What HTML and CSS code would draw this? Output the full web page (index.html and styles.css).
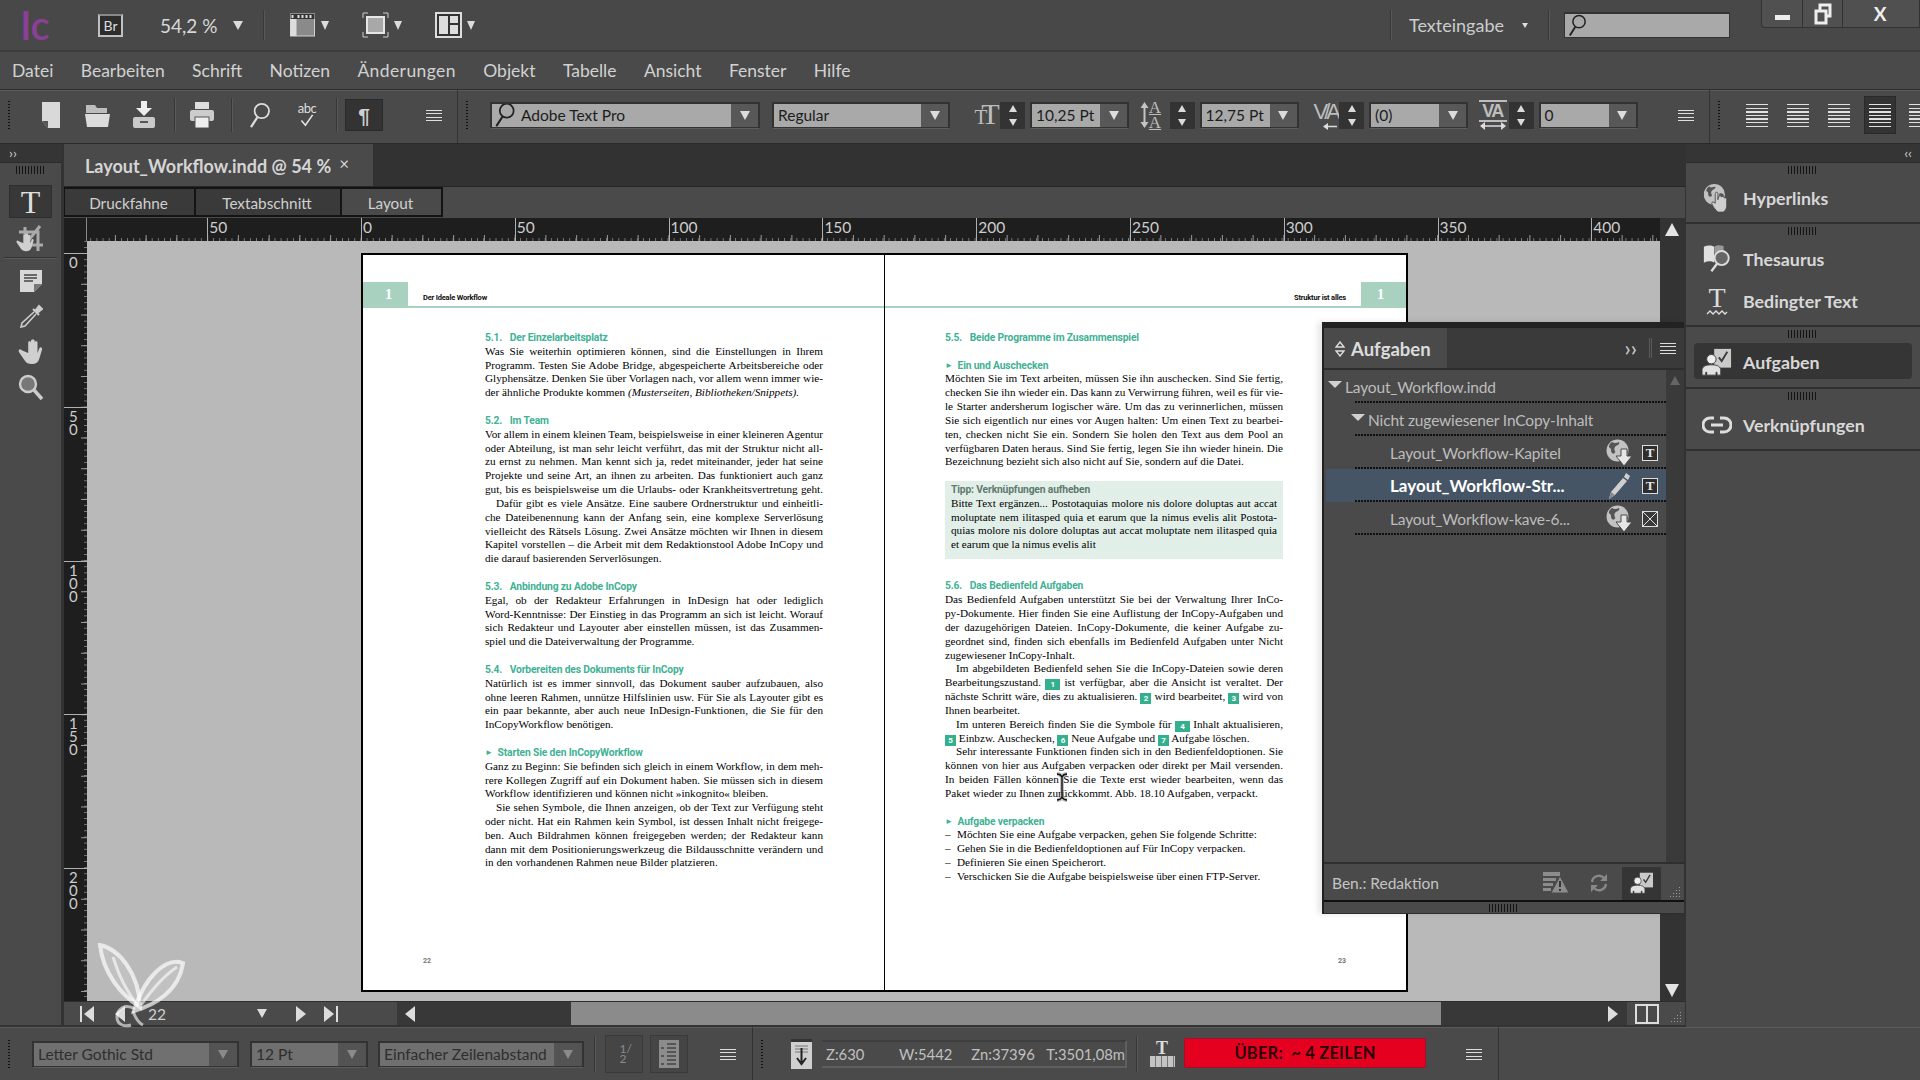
FILE: index.html
```html
<!DOCTYPE html>
<html lang="de">
<head>
<meta charset="utf-8">
<title>Adobe InCopy</title>
<link rel="stylesheet" href="styles.css">
</head>
<body>
<svg class="sprite" aria-hidden="true">
  <symbol id="globedown" viewBox="0 0 26 28"><circle cx="11.500" cy="11.500" r="11" fill="#c2c2c2"/><path d="M6 3c2 1.500 5 1 7 0 1 2-1 3-3 4s-2 4-1 5-1 4-3 2 0-4-2-5-1-4 2-6zm11 8c2-1 4 0 5 2-1 2-2 4-4 5-1-2 0-3 0-4s-2-2-1-3z" fill="#555"/><path d="M15 10h6v7h5l-8 10-8-10h5z" fill="#e6e6e6" stroke="#4a4a4a"/></symbol>
  <symbol id="globehand" viewBox="0 0 30 34"><circle cx="12" cy="13" r="12" fill="#c2c2c2"/><path d="M6 4c2 1.500 5 1 7 0 1 2-1 3-3 4s-2 4-1 5-1 4-3 2 0-4-2-5-1-4 2-6zm12 8c2-1 4 0 5 2-1 2-2 4-5 6-1-2 1-3 0-5s-1-2 0-3z" fill="#555"/><path d="M13 12c0-2 3-2 3 0v7l1-4c2-1 3 0 3 1l1-1c2 0 2 1 2 2 2-1 3 0 3 2v7c0 3-2 6-4 7h-6c-2-2-6-6-7-10 0-2 2-2 4 0z" fill="#cfcfcf" stroke="#4a4a4a"/></symbol>
  <symbol id="pencil" viewBox="0 0 24 28"><path d="M19 1l4 3-2 4-4-3zM16 6l4 3L8 23l-6 4 2-7z" fill="#cfcfcf"/><path d="M4 20l4 3-6 4z" fill="#8a8a8a"/></symbol>
  <symbol id="person" viewBox="0 0 32 30"><rect x="13" y="1" width="18" height="20" fill="#c9c9c9"/><path d="M18 10l3 4 6-10" fill="none" stroke="#3c3c3c" stroke-width="2"/><circle cx="10" cy="12" r="5" fill="#eee" stroke="#3c3c3c"/><path d="M0 29v-6c1-4 5-5 10-5s9 1 10 5v6h-4v-3h-1v3H5v-3H4v3z" fill="#e0e0e0" stroke="#3c3c3c"/></symbol>
  <symbol id="search" viewBox="0 0 24 30"><circle cx="14" cy="10" r="8" fill="none" stroke="currentColor" stroke-width="2"/><path d="M9 17L2 28" stroke="currentColor" stroke-width="2.500"/></symbol>
  <symbol id="hand" viewBox="0 0 28 28"><path d="M4 12c-2-2-4 0-3 2l6 9c2 3 4 4 8 4s7-2 8-6l3-10c0-2-2-3-3-1l-2 5V4c0-2-3-2-3 0v6V2c0-2-4-2-4 0v8V4c0-2-3-2-3 0v11z" fill="#cfcfcf"/></symbol>
</svg>

<div class="app">
  <header class="titlebar">
    <span class="logo">Ic</span>
    <span class="brbox">Br</span>
    <span class="zoomval">54,2 %</span>
    <span class="tri tri-zoom"></span>
    <span class="vsep vsep-title"></span>
    <svg class="ticon ticon-first" viewBox="0 0 26 26"><rect x="1" y="2" width="24" height="22" fill="#8a8a8a" stroke="#d0d0d0"/><rect x="1" y="2" width="6" height="22" fill="#ddd"/><rect x="1" y="2" width="24" height="5" fill="#333"/><path d="M3 3v3M9 3v3M13 3v3M17 3v3M21 3v3" stroke="#ddd" stroke-width="2"/></svg>
    <span class="tri tri-s"></span>
    <svg class="ticon ticon-next" viewBox="0 0 27 26"><path d="M1 6V1h5M21 1h5v5M26 20v5h-5M6 25H1v-5" fill="none" stroke="#ccc"/><rect x="5" y="5" width="17" height="16" fill="#a8a8a8" stroke="#e6e6e6" stroke-width="2"/></svg>
    <span class="tri tri-s"></span>
    <svg class="ticon ticon-next" viewBox="0 0 27 26"><rect x="1" y="1" width="25" height="24" fill="#333" stroke="#ddd" stroke-width="2"/><rect x="4" y="4" width="9" height="18" fill="#ddd"/><rect x="15" y="4" width="8" height="7" fill="#ddd"/><rect x="15" y="13" width="8" height="9" fill="#ddd"/></svg>
    <span class="tri tri-s"></span>
    <div class="titleright">
      <span class="vsep"></span>
      <span class="workspace">Texteingabe</span>
      <span class="tri tri-xs"></span>
      <span class="vsep"></span>
      <span class="searchbox"><svg class="searchicon" viewBox="0 0 24 30"><use href="#search"/></svg></span>
      <div class="winbtns">
        <span class="winbtn w42"><i class="winmin"></i></span>
        <span class="winbtn w40"><svg width="18" height="22" viewBox="0 0 18 22"><rect x="6" y="2" width="10" height="11" fill="none" stroke="#eee" stroke-width="3"/><rect x="2" y="8" width="10" height="12" fill="#505050" stroke="#eee" stroke-width="3"/></svg></span>
        <span class="winbtn w76">X</span>
      </div>
    </div>
  </header>

  <nav class="menubar">
    <span>Datei</span><span>Bearbeiten</span><span>Schrift</span><span>Notizen</span><span>Änderungen</span><span>Objekt</span><span>Tabelle</span><span>Ansicht</span><span>Fenster</span><span>Hilfe</span>
  </nav>

  <div class="controlbar">
    <section class="cb cb1">
      <i class="vgrip"></i>
      <svg class="ci c-new" viewBox="0 0 18 26"><path d="M0 0h18v26H6l-6-7z" fill="#d9d9d9"/><path d="M0 19h6v7z" fill="#555"/></svg>
      <svg class="ci c-open" viewBox="0 0 25 26"><path d="M1 3h9l2 3h10v5H1z" fill="#bdbdbd"/><path d="M0 12h25l-2 13H2z" fill="#dcdcdc"/></svg>
      <svg class="ci c-place" viewBox="0 0 24 28"><path d="M9 0h6v7h5l-8 8-8-8h5z" fill="#eee"/><rect x="1" y="16" width="22" height="11" rx="2" fill="#c9c9c9"/><rect x="8" y="20" width="8" height="2" fill="#555"/></svg>
      <span class="vsep vsep-s s1a"></span>
      <svg class="ci c-print" viewBox="0 0 24 26"><rect x="5" y="0" width="14" height="7" fill="#ddd"/><rect x="0" y="8" width="24" height="11" rx="2" fill="#ccc"/><rect x="5" y="15" width="14" height="11" fill="#eee" stroke="#555"/></svg>
      <span class="vsep vsep-s s1b"></span>
      <svg class="ci c-find" viewBox="0 0 24 30"><use href="#search"/></svg>
      <span class="spell c-spell"><b>abc</b><svg viewBox="0 0 20 16" width="16" height="13"><path d="M3 8l5 6 9-13" fill="none" stroke="#e4e4e4" stroke-width="2"/></svg></span>
      <span class="vsep vsep-s s1c"></span>
      <span class="pilcrow">¶</span>
      <i class="burger b-cb1"></i>
    </section>
    <section class="cb cb2">
      <i class="vgrip"></i>
      <div class="combo c-font"><span class="field"><svg class="fieldsearch" viewBox="0 0 24 30"><use href="#search"/></svg>Adobe Text Pro</span><span class="dd"><i class="tri"></i></span></div>
      <div class="combo c-style"><span class="field">Regular</span><span class="dd"><i class="tri"></i></span></div>
      <span class="glyph g-size"><b>T</b></span>
      <span class="spin"><i class="tri up"></i><i class="tri"></i></span>
      <div class="combo c-num"><span class="field">10,25 Pt</span><span class="dd"><i class="tri"></i></span></div>
      <span class="glyph g-lead"><svg width="9" height="26" viewBox="0 0 9 26"><path d="M4.500 4v18" stroke="#c4c4c4" stroke-width="2"/><path d="M4.500 0l4 6h-8zM4.500 26l4-6h-8z" fill="#c4c4c4"/></svg><em>AA</em></span>
      <span class="spin"><i class="tri up"></i><i class="tri"></i></span>
      <div class="combo c-num"><span class="field">12,75 Pt</span><span class="dd"><i class="tri"></i></span></div>
      <span class="glyph g-kern"><span>V/A</span><svg width="14" height="7" viewBox="0 0 14 7"><path d="M3 3.500h11" stroke="#ddd" stroke-width="1.500"/><path d="M0 3.500L5 0v7z" fill="#ddd"/></svg></span>
      <span class="spin"><i class="tri up"></i><i class="tri"></i></span>
      <div class="combo c-num"><span class="field">(0)</span><span class="dd"><i class="tri"></i></span></div>
      <span class="glyph g-track"><span>VA</span><svg width="26" height="8" viewBox="0 0 26 8"><path d="M3 4h20" stroke="#ddd" stroke-width="1.500"/><path d="M0 4l5-4v8zM26 4l-5-4v8z" fill="#ddd"/></svg></span>
      <span class="spin"><i class="tri up"></i><i class="tri"></i></span>
      <div class="combo c-num"><span class="field">0</span><span class="dd"><i class="tri"></i></span></div>
      <i class="burger b-cb2"></i>
    </section>
    <section class="cb cb3">
      <i class="vgrip"></i>
      <i class="align al-first"></i><i class="align"></i><i class="align"></i>
      <span class="alignbox"><i class="align"></i></span>
      <i class="align al-last"></i>
    </section>
  </div>

  <div class="work">
    <aside class="tools">
      <div class="strip"><span>››</span></div>
      <i class="grip grip-tools"></i>
      <div class="toolbtn active"><span class="t-glyph">T</span></div>
      <div class="toolbtn crop"><svg width="30" height="30" viewBox="0 0 30 30"><path d="M9 3v18h18M3 8h19v19M24 2L8 22" fill="none" stroke="#aaa" stroke-width="3"/><use href="#hand" x="0" y="9" width="19" height="19"/></svg></div>
      <hr class="toolsep">
      <div class="toolbtn"><svg width="22" height="22" viewBox="0 0 22 22"><path d="M0 0h22v14l-8 8H0z" fill="#d8d8d8"/><path d="M4 5h13M4 8h13M4 11h9" stroke="#444" stroke-width="1.500"/><path d="M14 22v-8h8z" fill="#777"/></svg></div>
      <div class="toolbtn"><svg width="24" height="24" viewBox="0 0 24 24"><path d="M15 8L3 19l-1 4 4-1L17 10" fill="none" stroke="#ccc" stroke-width="1.600"/><path d="M14 5l6 6M16 7l4-5 3 3-5 4" fill="#ccc" stroke="#ccc" stroke-width="2"/></svg></div>
      <div class="toolbtn"><svg width="26" height="26" viewBox="0 0 28 28"><use href="#hand"/></svg></div>
      <div class="toolbtn"><svg width="26" height="28" viewBox="0 0 26 28"><circle cx="10" cy="10" r="8" fill="#777" stroke="#ccc" stroke-width="2.400"/><path d="M16 16l8 9" stroke="#ccc" stroke-width="3.500"/></svg></div>
    </aside>

    <main class="doc">
      <div class="tabbar"><div class="doctab">Layout_Workflow.indd @ 54 %<span class="close">×</span></div></div>
      <div class="viewtabs"><span class="vt vt1">Druckfahne</span><span class="vt vt2">Textabschnitt</span><span class="vt vt3">Layout</span></div>
      <div class="rulerrow">
        <div class="corner"></div>
        <div class="hruler">
          <span class="rc rc-first"></span><span class="rc">50</span><span class="rc">0</span><span class="rc">50</span><span class="rc">100</span><span class="rc">150</span><span class="rc">200</span><span class="rc">250</span><span class="rc">300</span><span class="rc">350</span><span class="rc rc-last">400</span>
        </div>
        <div class="scrollcap"><i class="tri up big"></i></div>
      </div>
      <div class="mid">
        <div class="vruler">
          <span class="vc vc-first"></span>
          <span class="vc"><b>0</b></span>
          <span class="vc"><b>50</b></span>
          <span class="vc"><b>100</b></span>
          <span class="vc"><b>150</b></span>
          <span class="vc vc-last"><b>200</b></span>
        </div>
        <div class="canvas">
          <div class="spread">
            <article class="page page-l">
              <div class="pagehead"><span class="thumb">1</span><span class="runhead">Der Ideale Workflow</span></div>
              <div class="col">
                <h3><span class="n">5.1.</span>Der Einzelarbeitsplatz</h3>
                <p>Was Sie weiterhin optimieren können, sind die Einstellungen in Ihrem</p>
                <p>Programm. Testen Sie Adobe Bridge, abgespeicherte Arbeitsbereiche oder</p>
                <p>Glyphensätze. Denken Sie über Vorlagen nach, vor allem wenn immer wie-</p>
                <p class="e">der ähnliche Produkte kommen <em>(Musterseiten, Bibliotheken/Snippets).</em></p>
                <h3 class="gap"><span class="n">5.2.</span>Im Team</h3>
                <p>Vor allem in einem kleinen Team, beispielsweise in einer kleineren Agentur</p>
                <p>oder Abteilung, ist man sehr leicht verführt, das mit der Struktur nicht all-</p>
                <p>zu ernst zu nehmen. Man kennt sich ja, redet miteinander, jeder hat seine</p>
                <p>Projekte und seine Art, an ihnen zu arbeiten. Das funktioniert auch ganz</p>
                <p>gut, bis es beispielsweise um die Urlaubs- oder Krankheitsvertretung geht.</p>
                <p class="i">Dafür gibt es viele Ansätze. Eine saubere Ordnerstruktur und einheitli-</p>
                <p>che Dateibenennung kann der Anfang sein, eine komplexe Serverlösung</p>
                <p>vielleicht des Rätsels Lösung. Zwei Ansätze möchten wir Ihnen in diesem</p>
                <p>Kapitel vorstellen – die Arbeit mit dem Redaktionstool Adobe InCopy und</p>
                <p class="e">die darauf basierenden Serverlösungen.</p>
                <h3 class="gap"><span class="n">5.3.</span>Anbindung zu Adobe InCopy</h3>
                <p>Egal, ob der Redakteur Erfahrungen in InDesign hat oder lediglich</p>
                <p>Word-Kenntnisse: Der Einstieg in das Programm an sich ist leicht. Worauf</p>
                <p>sich Redakteur und Layouter aber einstellen müssen, ist das Zusammen-</p>
                <p class="e">spiel und die Dateiverwaltung der Programme.</p>
                <h3 class="gap"><span class="n">5.4.</span>Vorbereiten des Dokuments für InCopy</h3>
                <p>Natürlich ist es immer sinnvoll, das Dokument sauber aufzubauen, also</p>
                <p>ohne leeren Rahmen, unnütze Hilfslinien usw. Für Sie als Layouter gibt es</p>
                <p>ein paar bekannte, aber auch neue InDesign-Funktionen, die Sie für den</p>
                <p class="e">InCopyWorkflow benötigen.</p>
                <h3 class="gap"><span class="arrow">►</span>Starten Sie den InCopyWorkflow</h3>
                <p>Ganz zu Beginn: Sie befinden sich gleich in einem Workflow, in dem meh-</p>
                <p>rere Kollegen Zugriff auf ein Dokument haben. Sie müssen sich in diesem</p>
                <p class="e">Workflow identifizieren und können nicht »inkognito« bleiben.</p>
                <p class="i">Sie sehen Symbole, die Ihnen anzeigen, ob der Text zur Verfügung steht</p>
                <p>oder nicht. Hat ein Rahmen kein Symbol, ist dessen Inhalt nicht freigege-</p>
                <p>ben. Auch Bildrahmen können freigegeben werden; der Redakteur kann</p>
                <p>dann mit dem Positionierungswerkzeug die Bildausschnitte verändern und</p>
                <p class="e">in den vorhandenen Rahmen neue Bilder platzieren.</p>
              </div>
              <div class="folio">22</div>
            </article>
            <article class="page page-r">
              <div class="pagehead"><span class="runhead">Struktur ist alles</span><span class="thumb">1</span></div>
              <div class="col">
                <h3><span class="n">5.5.</span>Beide Programme im Zusammenspiel</h3>
                <h3 class="gap1"><span class="arrow">►</span>Ein und Auschecken</h3>
                <p>Möchten Sie im Text arbeiten, müssen Sie ihn auschecken. Sind Sie fertig,</p>
                <p>checken Sie ihn wieder ein. Das kann zu Verwirrung führen, weil es für vie-</p>
                <p>le Starter andersherum logischer wäre. Um das zu verinnerlichen, müssen</p>
                <p>Sie sich eigentlich nur eines vor Augen halten: Um einen Text zu bearbei-</p>
                <p>ten, checken nicht Sie ein. Sondern Sie holen den Text aus dem Pool an</p>
                <p>verfügbaren Daten heraus. Sind Sie fertig, legen Sie ihn wieder hinein. Die</p>
                <p class="e">Bezeichnung bezieht sich also nicht auf Sie, sondern auf die Datei.</p>
                <div class="tip">
                  <h4>Tipp: Verknüpfungen aufheben</h4>
                  <p>Bitte Text ergänzen... Postotaquias molore nis dolore doluptas aut accat</p>
                  <p>moluptate nem ilitasped quia et earum que la nimus evelis alit Postota-</p>
                  <p>quias molore nis dolore doluptas aut accat moluptate nem ilitasped quia</p>
                  <p class="e">et earum que la nimus evelis alit</p>
                </div>
                <h3 class="gap-after-tip"><span class="n">5.6.</span>Das Bedienfeld Aufgaben</h3>
                <p>Das Bedienfeld Aufgaben unterstützt Sie bei der Verwaltung Ihrer InCo-</p>
                <p>py-Dokumente. Hier finden Sie eine Auflistung der InCopy-Aufgaben und</p>
                <p>der dazugehörigen Dateien. InCopy-Dokumente, die keiner Aufgabe zu-</p>
                <p>geordnet sind, finden sich ebenfalls im Bedienfeld Aufgaben unter Nicht</p>
                <p class="e">zugewiesener InCopy-Inhalt.</p>
                <p class="i">Im abgebildeten Bedienfeld sehen Sie die InCopy-Dateien sowie deren</p>
                <p>Bearbeitungszustand. <span class="badge wide">1</span> ist verfügbar, aber die Ansicht ist veraltet. Der</p>
                <p>nächste Schritt wäre, dies zu aktualisieren. <span class="badge">2</span> wird bearbeitet, <span class="badge">3</span> wird von</p>
                <p class="e">Ihnen bearbeitet.</p>
                <p class="i">Im unteren Bereich finden Sie die Symbole für <span class="badge wide">4</span> Inhalt aktualisieren,</p>
                <p class="e"><span class="badge">5</span> Einbzw. Auschecken, <span class="badge">6</span> Neue Aufgabe und <span class="badge">7</span> Aufgabe löschen.</p>
                <p class="i">Sehr interessante Funktionen finden sich in den Bedienfeldoptionen. Sie</p>
                <p>können von hier aus Aufgaben verpacken oder direkt per Mail versenden.</p>
                <p>In beiden Fällen können Sie die Texte erst wieder bearbeiten, wenn das</p>
                <p class="e">Paket wieder zu Ihnen zurückkommt. Abb. 18.10 Aufgaben, verpackt.</p>
                <h3 class="gap"><span class="arrow">►</span>Aufgabe verpacken</h3>
                <p class="li"><span class="dash">–</span>Möchten Sie eine Aufgabe verpacken, gehen Sie folgende Schritte:</p>
                <p class="li"><span class="dash">–</span>Gehen Sie in die Bedienfeldoptionen auf Für InCopy verpacken.</p>
                <p class="li"><span class="dash">–</span>Definieren Sie einen Speicherort.</p>
                <p class="li"><span class="dash">–</span>Verschicken Sie die Aufgabe beispielsweise über einen FTP-Server.</p>
              </div>
              <div class="folio">23</div>
            </article>
          </div>
        </div>
        <div class="vscroll"><i class="tri big"></i></div>
      </div>
      <div class="hscroll">
        <div class="pagenav">
          <svg class="nav nav-first" width="14" height="16" viewBox="0 0 14 16"><rect x="0" width="2" height="16" fill="#ddd"/><path d="M14 0v16L4 8z" fill="#ddd"/></svg>
          <svg class="nav nav-prev" width="10" height="16" viewBox="0 0 10 16"><path d="M10 0v16L0 8z" fill="#ddd"/></svg>
          <span class="pageno">22</span>
          <i class="tri nav-dd"></i>
          <svg class="nav nav-next" width="10" height="16" viewBox="0 0 10 16"><path d="M0 0v16l10-8z" fill="#ddd"/></svg>
          <svg class="nav nav-last" width="14" height="16" viewBox="0 0 14 16"><rect x="12" width="2" height="16" fill="#ddd"/><path d="M0 0v16l10-8z" fill="#ddd"/></svg>
        </div>
        <div class="track track-l"><svg width="10" height="16" viewBox="0 0 10 16"><path d="M10 0v16L0 8z" fill="#ddd"/></svg></div>
        <div class="thumbbar"></div>
        <div class="track track-r"><svg width="10" height="16" viewBox="0 0 10 16"><path d="M0 0v16l10-8z" fill="#ddd"/></svg></div>
        <div class="cornerbox"><svg width="24" height="20" viewBox="0 0 24 20"><path d="M1 1h22v18H1zM12 1v18" fill="none" stroke="#ddd" stroke-width="2"/></svg><i class="resize"></i></div>
      </div>
    </main>

    <aside class="dock">
      <div class="strip strip-r"><span>‹‹</span></div>
      <section class="dsec">
        <i class="grip"></i>
        <div class="ditem"><svg class="dicon" viewBox="0 0 30 34"><use href="#globehand"/></svg>Hyperlinks</div>
      </section>
      <section class="dsec">
        <i class="grip"></i>
        <div class="ditem"><svg class="dicon" viewBox="0 0 30 32"><path d="M1 3c4-2 8-2 11 0v17c-3-2-7-2-11 0z" fill="#e0e0e0"/><path d="M12 3c3-2 6-2 10-1v6c-5 0-8 3-9 8z" fill="#999"/><circle cx="20" cy="15" r="7.500" fill="#666" stroke="#ddd" stroke-width="2"/><path d="M15 21l-6 8" stroke="#ddd" stroke-width="2.500"/></svg>Thesaurus</div>
        <div class="ditem"><span class="dicon condt"><span>T</span><svg width="22" height="6" viewBox="0 0 22 6"><path d="M1 4l3-3 3 3 3-3 3 3 3-3 3 3 2-2" fill="none" stroke="#ddd" stroke-width="1.400"/></svg></span>Bedingter Text</div>
      </section>
      <section class="dsec">
        <i class="grip"></i>
        <div class="ditem sel"><svg class="dicon" viewBox="0 0 32 30"><use href="#person"/></svg>Aufgaben</div>
      </section>
      <section class="dsec">
        <i class="grip"></i>
        <div class="ditem"><svg class="dicon" viewBox="0 0 30 22"><path d="M12 4H8a7 7 0 0 0 0 14h4M18 4h4a7 7 0 0 1 0 14h-4M9 11h12" fill="none" stroke="#ddd" stroke-width="3"/></svg>Verknüpfungen</div>
      </section>
    </aside>
  </div>

  <footer class="status">
    <section class="st st1">
      <i class="vgrip"></i>
      <div class="combo off c-gothic"><span class="field">Letter Gothic Std</span><span class="dd"><i class="tri"></i></span></div>
      <div class="combo off c-pt"><span class="field">12 Pt</span><span class="dd"><i class="tri"></i></span></div>
      <div class="combo off c-lead"><span class="field">Einfacher Zeilenabstand</span><span class="dd"><i class="tri"></i></span></div>
      <span class="vsep vsep-st"></span>
      <span class="stbox box-a"><small>1/2</small></span>
      <span class="stbox box-b"><svg width="20" height="28" viewBox="0 0 20 28"><rect width="20" height="28" fill="#8c8c8c"/><path d="M8 4h9M8 8h9M8 12h9M8 16h9M8 20h9M8 24h9M2 8h3M2 16h3M2 24h3" stroke="#444" stroke-width="1.500"/></svg></span>
      <i class="burger b-st1"></i>
    </section>
    <section class="st st2">
      <i class="vgrip"></i>
      <svg class="thead" width="21" height="30" viewBox="0 0 21 30"><rect width="21" height="30" fill="#cfcfcf"/><rect width="21" height="3" fill="#333"/><path d="M4 7h13M4 10h13M4 13h13" stroke="#777" stroke-width="1"/><path d="M10.500 9v14M6 19l4.500 6 4.500-6" fill="none" stroke="#222" stroke-width="2"/></svg>
      <div class="counts"><span class="z">Z:630</span><span class="w">W:5442</span><span class="zn">Zn:37396</span><span>T:3501,08m</span></div>
      <span class="vsep vsep-st2"></span>
      <span class="tmeasure"><b>T</b><i></i></span>
      <div class="overset">ÜBER:&nbsp; ~ 4 ZEILEN</div>
      <i class="burger b-st2"></i>
    </section>
    <section class="st st3"></section>
  </footer>

  <div class="panel">
    <div class="phead">
      <div class="ptab"><svg width="10" height="16" viewBox="0 0 10 16"><path d="M5 1l4 5H1zM5 15l4-5H1z" fill="none" stroke="#ddd" stroke-width="1.400"/></svg>Aufgaben</div>
      <span class="pmore">››</span><i class="pbar"></i><i class="burger"></i>
    </div>
    <div class="pbody">
      <div class="plist">
        <div class="row lv0"><i class="tri"></i>Layout_Workflow.indd</div>
        <div class="row lv1"><i class="tri"></i>Nicht zugewiesener InCopy-Inhalt</div>
        <div class="row lv2"><span class="rtext">Layout_Workflow-Kapitel</span><svg class="ri" viewBox="0 0 26 28"><use href="#globedown"/></svg><span class="tb">T</span></div>
        <div class="row lv2 current"><span class="rtext">Layout_Workflow-Str...</span><svg class="ri" viewBox="0 0 24 28"><use href="#pencil"/></svg><span class="tb">T</span></div>
        <div class="row lv2"><span class="rtext">Layout_Workflow-kave-6...</span><svg class="ri" viewBox="0 0 26 28"><use href="#globedown"/></svg><span class="tb xb"><svg width="14" height="14" viewBox="0 0 14 14"><path d="M0 0l14 14M14 0L0 14" stroke="#ddd"/></svg></span></div>
      </div>
      <div class="pscroll"><i class="tri up"></i></div>
    </div>
    <div class="pfoot">
      <span class="pfoot-text">Ben.: Redaktion</span>
      <svg class="pf-warn" width="26" height="22" viewBox="0 0 26 22"><path d="M0 0h17v4H0zM0 6h13v3H0zM0 11h10v3H0zM0 16h8v3H0z" fill="#8c8c8c"/><path d="M17 4l9 17H8z" fill="#8c8c8c" stroke="#4a4a4a"/><path d="M17 9v6M17 17v2" stroke="#333" stroke-width="2"/></svg>
      <svg class="pf-sync" width="20" height="20" viewBox="0 0 20 20"><path d="M3 9a7 7 0 0 1 12-4l2 2M17 11a7 7 0 0 1-12 4l-2-2" fill="none" stroke="#888" stroke-width="2.400"/><path d="M18 1v7h-7zM2 19v-7h7z" fill="#888"/></svg>
      <span class="pf-on"><svg width="28" height="22" viewBox="0 0 32 30"><use href="#person"/></svg></span>
      <i class="resize"></i>
    </div>
    <div class="pgrip"><i class="grip grip-dark"></i></div>
  </div>

  <svg class="watermark" width="90" height="86" viewBox="0 0 90 86"><g fill="#fff" fill-opacity=".12" stroke="#fff" stroke-opacity=".68" stroke-width="4"><path d="M3 2C22 6 42 30 43 64 24 52 6 30 3 2z"/><path d="M86 20C70 14 48 32 37 68 58 62 82 48 86 20z"/></g><g fill="none" stroke="#fff" stroke-opacity=".6" stroke-width="3"><path d="M16 14C22 34 32 52 42 64M44 62C54 48 68 32 80 24"/><path d="M38 66C28 60 20 66 20 74s8 10 14 8M36 68c2 6 6 12 10 14"/></g></svg>
  <svg class="ibeam" width="16" height="30" viewBox="0 0 16 30"><path d="M3 2c3 0 4 1 5 3 1-2 2-3 5-3M8 5v20M3 28c3 0 4-1 5-3 1 2 2 3 5 3" fill="none" stroke="#999" stroke-opacity=".6" stroke-width="4"/><path d="M3 2c3 0 4 1 5 3 1-2 2-3 5-3M8 5v20M3 28c3 0 4-1 5-3 1 2 2 3 5 3" fill="none" stroke="#111" stroke-width="1.400"/></svg>
</div>
</body>
</html>
```

FILE: styles.css
```css
* { box-sizing: border-box; }
html, body { margin: 0; padding: 0; width: 1920px; height: 1080px; overflow: hidden; background: #4a4a4a; }
body { font-family: "Lato", "Open Sans", sans-serif; color: #cfcfcf; }
.sprite { position: absolute; width: 0; height: 0; }
i { font-style: normal; }

.app { position: relative; display: grid; grid-template-columns: 1920px; grid-template-rows: 52px 38px 54px 883px 53px; width: 1920px; height: 1080px; background: #4a4a4a; }

/* generic pieces */
.tri { display: inline-block; width: 0; height: 0; border-left: 5px solid transparent; border-right: 5px solid transparent; border-top: 9px solid #dcdcdc; }
.tri.up { border-top: 0; border-bottom: 9px solid #dcdcdc; }
.tri.big { border-left-width: 7px; border-right-width: 7px; border-top-width: 13px; border-bottom-width: 0; border-top-color: #e4e4e4; }
.tri.up.big { border-top-width: 0; border-bottom-width: 13px; border-bottom-color: #e4e4e4; }
.vsep { display: block; width: 2px; height: 30px; background: #383838; border-right: 1px solid #585858; }
.vgrip { display: block; flex: none; width: 2px; height: 28px; background: repeating-linear-gradient(180deg, #0f0f0f 0 1px, transparent 1px 3px); }
.grip { display: block; width: 30px; height: 8px; margin: 0 auto; background: repeating-linear-gradient(90deg, #151515 0 1px, transparent 1px 3px); }
.burger { display: block; flex: none; width: 16px; height: 11px; background: repeating-linear-gradient(180deg, #dedede 0 1px, transparent 1px 3.300px); }

/* title bar */
.titlebar { display: flex; align-items: center; padding-left: 20px; background: #484848; border-bottom: 2px solid #3c3c3c; box-shadow: 0 1px 0 #575757; }
.logo { width: 34px; font: 600 40px/46px "Lato", sans-serif; letter-spacing: -.5px; color: #8b3f97; }
.brbox { width: 25px; height: 23px; margin: 0 0 0 44px; background: #2d2d2d; border: 2px solid #c0c0c0; border-top-color: #888; font-size: 14px; line-height: 19px; text-align: center; color: #ddd; }
.zoomval { margin-left: 37px; width: 73px; font-size: 19px; color: #d8d8d8; }
.vsep-title { margin-left: 20px; }
.ticon { width: 27px; height: 26px; }
.ticon-first { margin-left: 24px; }
.ticon-next { margin-left: 33px; }
.tri-s { margin-left: 5px; border-left-width: 4.500px; border-right-width: 4.500px; }
.tri-xs { border-left-width: 3px; border-right-width: 3px; border-top-width: 5px; margin-left: 18px; }
.titleright { display: flex; align-items: center; margin-left: auto; height: 100%; }
.titleright > .vsep:first-child { margin-right: 17px; }
.workspace { font-size: 18px; color: #cdcdcd; }
.tri-xs + .vsep { margin-left: 20px; margin-right: 14px; }
.searchbox { display: flex; align-items: center; width: 166px; height: 26px; padding-left: 3px; background: #a9a9a9; border: 1px solid #333; border-top-width: 2px; color: #222; }
.searchicon { width: 19px; height: 23px; }
.winbtns { display: flex; align-self: flex-start; margin-left: 31px; }
.winbtn { display: flex; align-items: center; justify-content: center; height: 28px; background: #505050; border: 1px solid #333; border-top: 0; border-left-width: 0; color: #eee; font-weight: 700; font-size: 19px; }
.winbtn.w42 { width: 42px; border-left-width: 1px; border-bottom-left-radius: 4px; padding-top: 8px; }
.winbtn.w40 { width: 40px; }
.winbtn.w76 { width: 77px; padding-right: 2px; }
.winmin { display: block; width: 15px; height: 5px; background: #eee; }

/* menu */
.menubar { display: flex; align-items: center; gap: 27.400px; padding-left: 12px; font-size: 17.500px; color: #d2d2d2; border-bottom: 1px solid #2e2e2e; background: #4a4a4a; }
.menubar span:nth-child(5) { letter-spacing: .4px; }

/* control bar */
.controlbar { display: flex; padding-bottom: 3px; border-bottom: 1px solid #2a2a2a; box-shadow: inset 0 1px 0 #595959; }
.cb { display: flex; align-items: center; height: 53px; margin-bottom: -3px; padding-bottom: 3px; border-right: 1px solid #333; }
.cb .vgrip { margin-left: 8px; }
.cb1 { width: 458px; flex: none; }
.cb2 { width: 1252px; flex: none; }
.cb3 { flex: 1; min-width: 0; border-right: 0; overflow: hidden; }
.ci { flex: none; }
.c-new { width: 18px; height: 26px; margin-left: 32px; }
.c-open { width: 25px; height: 26px; margin-left: 25px; }
.c-place { width: 24px; height: 28px; margin-left: 22px; }
.vsep-s { height: 34px; }
.s1a { margin-left: 18px; }
.c-print { width: 24px; height: 26px; margin-left: 14px; }
.s1b { margin-left: 17px; }
.c-find { width: 22px; height: 27px; margin-left: 16px; color: #dcdcdc; }
.spell { display: flex; flex-direction: column; align-items: center; width: 22px; margin-left: 25px; font-size: 12px; line-height: 11px; color: #ddd; }
.spell b { font-weight: 400; font-size: 13px; letter-spacing: -.5px; }
.s1c { margin-left: 18px; }
.pilcrow { display: flex; align-items: center; justify-content: center; width: 38px; height: 32px; margin-left: 7px; background: #333; border: 1px solid #2a2a2a; font: 700 21px/1 "Liberation Sans", sans-serif; color: #cfcfcf; }
.b-cb1 { margin-left: 43px; }

.combo { display: flex; flex: none; height: 27px; background: #333; border: 1px solid #333; border-bottom-color: #5d5d5d; padding: 1px; }
.field { display: flex; align-items: center; flex: 1; min-width: 0; padding-left: 4px; overflow: hidden; white-space: nowrap; background: #a9a9a9; color: #1c1c1c; font-size: 15.500px; }
.dd { display: flex; align-items: center; justify-content: center; flex: none; width: 27px; background: #585858; }
.fieldsearch { width: 24px; height: 26px; color: #222; margin-right: 4px; margin-left: -3px; }
.c-font { width: 270px; margin-left: 22px; }
.c-style { width: 178px; margin-left: 12px; }
.c-num { width: 99px; margin-left: 5px; }
.glyph { display: block; flex: none; width: 28px; color: #bdbdbd; text-align: center; font-family: "Liberation Serif", serif; }
.g-size { margin-left: 20px; font-size: 30px; line-height: 30px; letter-spacing: -6px; white-space: nowrap; }
.g-size::before { content: "T"; font-size: 21px; }
.g-size b { font-weight: 400; }
.g-lead { display: flex; align-items: center; margin-left: 10.500px; }
.g-lead em { display: block; width: 13px; word-break: break-all; font-style: normal; font-size: 17px; line-height: 15px; text-decoration: underline; }
.g-kern { display: flex; flex-direction: column; align-items: flex-end; margin-left: 10.500px; font: 400 22px/22px "Liberation Sans", sans-serif; letter-spacing: -4px; white-space: nowrap; }
.g-track { display: flex; flex-direction: column; align-items: center; margin-left: 10.500px; font: 700 18px/18px "Liberation Sans", sans-serif; letter-spacing: -1.500px; }
.g-track span { border-top: 2px solid #bdbdbd; border-bottom: 2px solid #bdbdbd; width: 100%; }
.spin { display: flex; flex-direction: column; align-items: center; flex: none; width: 25px; height: 27px; margin-left: 2px; gap: 1px; background: #333; }
.spin .tri { flex: none; margin: 3px 0; border-left-width: 4px; border-right-width: 4px; border-top-width: 7px; border-bottom-width: 0; }
.spin .tri.up { border-top-width: 0; border-bottom-width: 7px; }
.b-cb2 { margin-left: 40px; }
.align { display: block; flex: none; width: 22px; height: 23px; background: repeating-linear-gradient(180deg, #e0e0e0 0 1.500px, transparent 1.500px 3.600px); }
.al-first { margin-left: 26px; }
.cb3 > .align { margin-right: 19px; }
.alignbox { display: flex; align-items: center; justify-content: center; flex: none; width: 32px; height: 38px; margin-left: -5px; margin-right: 13px; background: #333; border: 1px solid #2a2a2a; }

/* main work area */
.work { display: grid; grid-template-columns: 64px 1621px 235px; grid-template-rows: 883px; min-height: 0; }
.strip { height: 19px; background: #353535; border-bottom: 1px solid #2a2a2a; font-size: 14px; line-height: 17px; padding-left: 9px; color: #ccc; }
.strip-r { text-align: right; padding: 0 8px 0 0; }
.tools { display: flex; flex-direction: column; align-items: center; background: #4a4a4a; border-right: 3px solid #333; border-bottom: 2px solid #333; }
.tools .strip { align-self: stretch; }
.grip-tools { margin-top: 3px; margin-bottom: 11px; }
.toolbtn { display: flex; align-items: center; justify-content: center; width: 43px; height: 35px; flex: none; }
.toolbtn.active { height: 33px; background: #383838; border: 1px solid #2e2e2e; }
.toolbtn:nth-last-child(2) { margin-top: 1px; }
.toolbtn:last-child { margin-top: 1px; }
.t-glyph { font: 400 32px/1 "Liberation Serif", serif; color: #dedede; }
.toolbtn.crop { margin-top: 3px; }
.toolsep { align-self: stretch; margin: 1px 4px 4px; border: 0; border-top: 1px solid #333; border-bottom: 1px solid #5a5a5a; width: auto; }

.doc { display: grid; grid-template-columns: 1621px; grid-template-rows: 43px 31px 23px 760px 26px; min-width: 0; background: #4a4a4a; }
.tabbar { background: #323232; border-bottom: 1px solid #262626; }
.doctab { display: flex; align-items: center; gap: 8px; width: 309px; height: 42px; padding-left: 21px; padding-top: 2px; background: #4a4a4a; font-size: 18px; font-weight: 700; color: #d5d5d5; }
.close { font-weight: 400; font-size: 17px; margin-top: -6px; }
.viewtabs { display: flex; align-items: stretch; padding-bottom: 1px; }
.vt { display: flex; align-items: center; justify-content: center; padding: 2px 2px 0 0; font-size: 15.300px; color: #d0d0d0; background: #3a3a3a; border: 2px solid #141414; border-left-width: 0; }
.vt1 { width: 132px; border-left-width: 1px; }
.vt2 { width: 146px; }
.vt3 { width: 101px; background: #4a4a4a; }

.rulerrow { display: flex; height: 23px; }
.corner { flex: none; width: 23px; background: #1e1e1e; border-right: 1px solid #888; }
.hruler { display: flex; flex: 1; min-width: 0; background-color: #1e1e1e; background-image: linear-gradient(90deg, #9a9a9a 1px, transparent 1px), linear-gradient(90deg, #7d7d7d 1px, transparent 1px); background-size: 30.760px 6px, 6.152px 3px; background-repeat: repeat-x; background-position: 27.900px 100%, 3.300px 100%; overflow: hidden; }
.rc { flex: none; width: 153.800px; padding-left: 1px; border-left: 1px solid #b0b0b0; font-size: 15.500px; line-height: 19px; color: #cdcdcd; }
.rc-first { width: 120.200px; border-left: 0; }
.rc-last { flex: 1; }
.scrollcap { display: flex; justify-content: center; align-items: center; flex: none; width: 25px; background: #333; padding-right: 2px; }

.mid { display: flex; min-height: 0; }
.vruler { display: flex; flex-direction: column; flex: none; width: 23px; background-color: #1e1e1e; background-image: linear-gradient(180deg, #9a9a9a 1px, transparent 1px), linear-gradient(180deg, #7d7d7d 1px, transparent 1px); background-size: 6px 30.760px, 3px 6.152px; background-repeat: repeat-y; background-position: 100% 12px, 100% 6px; }
.vc { display: block; flex: none; height: 153.800px; padding: 2px 0 0 5px; border-top: 1px solid #b0b0b0; }
.vc b { display: block; width: 9px; word-break: break-all; font-weight: 400; font-size: 15px; line-height: 13px; color: #cdcdcd; }
.vc-first { height: 12px; border-top: 0; padding: 0; }
.vc-last { flex: 1; }
.canvas { flex: none; width: 1573px; background: #b9b9b9; padding: 12px 0 0 274px; overflow: hidden; }
.vscroll { display: flex; flex-direction: column; justify-content: flex-end; align-items: center; flex: 1; padding: 0 2px 4px 0; background: #333; }

.spread { display: flex; width: 1047px; height: 739px; background: #fff; border: 2px solid #000; }
.page { display: flex; flex-direction: column; color: #000; background: #fff; }
.page-l { width: 522px; flex: none; border-right: 1px solid #000; }
.page-r { flex: 1; }
.pagehead { display: flex; align-items: center; flex: none; height: 26px; margin-top: 27px; border-bottom: 2px solid #a9d3c1; }
.thumb { display: block; flex: none; width: 45px; height: 25px; margin-bottom: -1px; background: #a8d2bf; color: #fff; text-align: center; font: 700 14.500px/24px "Liberation Serif", serif; }
.page-l .thumb { padding-left: 6px; }
.page-r .thumb { padding-right: 6px; }
.runhead { font: 700 7.500px/1 "Roboto", sans-serif; color: #111; letter-spacing: -.2px; margin-top: 8px; }
.page-l .runhead { margin-left: 15px; }
.page-r .pagehead { justify-content: flex-end; }
.page-r .runhead { margin-right: 15px; }
.col { flex: none; width: 338px; margin-top: 23px; font-family: "Liberation Serif", serif; font-size: 11.200px; line-height: 13.830px; }
.page-l .col { margin-left: 122px; }
.page-r .col { margin-left: 60px; }
.col p { margin: 0; height: 13.830px; text-align: justify; text-align-last: justify; word-spacing: -1px; }
.col p.e { text-align-last: left; word-spacing: 0; }
.col p.li { text-align-last: left; word-spacing: 0; }
.col p.i { padding-left: 11px; }
h3, h4 { margin: 0; height: 13.830px; font: 700 10.300px/13.830px "Roboto", sans-serif; color: #3fb295; letter-spacing: -.15px; white-space: nowrap; }
h3.gap { margin-top: 13.830px; }
h3.gap1 { margin-top: 13.830px; }
h3.gap-after-tip { margin-top: 20.500px; }
.n { display: inline-block; width: 24.700px; }
.arrow { display: inline-block; width: 12.500px; font-size: 8px; vertical-align: .5px; }
.tip { height: 78px; margin: 11.700px 0 0; padding: 2px 6px 0; background: #e2efe9; }
.tip h4 { color: #5f7a70; }
.badge { display: inline-block; width: 11px; height: 11px; background: #35b08f; color: #fff; text-align: center; text-align-last: center; font: 700 8px/11px "Roboto", sans-serif; vertical-align: -1px; }
.badge.wide { width: 14.500px; }
.dash { display: inline-block; width: 12px; }
.folio { margin-top: auto; padding: 0 60px 25px; font: 700 7px/1 "Roboto", sans-serif; color: #777; }
.page-r .folio { text-align: right; }

.hscroll { display: flex; height: 26px; border-top: 1px solid #2d2d2d; border-bottom: 2px solid #333; }
.pagenav { display: flex; align-items: center; flex: none; width: 333px; background: #4a4a4a; }
.nav-first { margin-left: 16px; }
.nav-prev { margin-left: 21px; }
.pageno { margin-left: 23px; width: 40px; font-size: 15.500px; color: #d0d0d0; }
.nav-dd { margin-left: 69px; }
.nav-next { margin-left: 29px; }
.nav-last { margin-left: 18px; }
.track { display: flex; align-items: center; flex: none; background: #383838; }
.track-l { width: 174px; padding-left: 8px; }
.thumbbar { flex: none; width: 870px; background: #8b8b8b; }
.track-r { width: 186px; justify-content: flex-end; padding-right: 9px; }
.cornerbox { position: relative; display: flex; align-items: center; flex: 1; min-width: 0; padding-left: 8px; background: #4a4a4a; }
.resize { position: absolute; right: 2px; bottom: 1px; width: 16px; height: 16px; background: radial-gradient(circle, #9a9a9a .7px, transparent 1px) 0 0/3px 3px; clip-path: polygon(100% 0, 100% 100%, 0 100%); }

/* dock */
.dock { display: flex; flex-direction: column; background: #4a4a4a; border-left: 1px solid #333; }
.dsec { flex: none; padding-top: 3px; padding-bottom: 7px; border-bottom: 2px solid #2f2f2f; }
.dsec:nth-of-type(1) { height: 61px; }
.dsec:nth-of-type(2) { height: 103px; }
.dsec:nth-of-type(3) { height: 62px; }
.dsec:nth-of-type(4) { height: 62px; }
.ditem { display: flex; align-items: center; height: 36px; margin-top: 6px; padding-left: 16px; font-size: 17.800px; font-weight: 700; color: #d8d8d8; }
.dicon { flex: none; width: 30px; height: 30px; margin-right: 11px; }
.ditem.sel { margin: 5px 8px 0; padding-left: 8px; padding-top: 1px; background: #353535; border-radius: 4px; }
.dsec:nth-of-type(4) .ditem { padding-top: 1px; }
.condt { display: flex; flex-direction: column; align-items: center; color: #ddd; }
.condt span { font: 400 28px/24px "Liberation Serif", serif; }

/* status */
.status { display: flex; height: 53px; }
.st { display: flex; align-items: center; height: 100%; border-top: 1px solid #5a5a5a; border-right: 1px solid #333; }
.st .vgrip { margin-left: 8px; }
.st1 { width: 753px; flex: none; }
.st2 { width: 746px; flex: none; }
.st3 { flex: 1; border-right: 0; }
.combo.off .field { background: #707070; color: #2e2e2e; font-size: 15.500px; }
.combo.off .dd { background: #535353; width: 28px; }
.combo.off .dd .tri { border-top-color: #8a8a8a; }
.c-gothic { width: 207px; margin-left: 22px; }
.c-pt { width: 118px; margin-left: 11px; }
.c-lead { width: 206px; margin-left: 10px; }
.vsep-st { height: 36px; margin-left: 10px; }
.stbox { display: flex; flex-direction: column; align-items: center; justify-content: center; flex: none; width: 38px; height: 38px; background: #454545; border: 1px solid #3a3a3a; color: #8a8a8a; }
.box-a { margin-left: 9px; }
.box-a small { display: block; width: 9px; word-break: break-all; font-size: 12px; line-height: 10px; }
.box-b { margin-left: 7px; }
.b-st1 { margin-left: 32px; }
.thead { margin-left: 28px; flex: none; }
.counts { display: flex; flex: none; width: 305px; height: 28px; margin-left: 10px; padding-left: 4px; border-top: 2px solid #3e3e3e; border-bottom: 2px solid #5f5f5f; border-right: 2px solid #5f5f5f; overflow: hidden; align-items: center; white-space: nowrap; font-size: 14.800px; color: #c0c0c0; }
.z { width: 76px; }
.w { width: 75px; }
.zn { width: 78px; }
.vsep-st2 { height: 36px; margin-left: 9px; }
.tmeasure { display: flex; flex-direction: column; align-items: center; flex: none; width: 26px; margin-left: 11px; }
.tmeasure b { font: 700 18px/15px "Liberation Serif", serif; color: #ddd; }
.tmeasure i { display: block; width: 25px; height: 11px; background: repeating-linear-gradient(90deg, #c4c4c4 0 5px, #777 5px 6px); }
.overset { display: flex; align-items: center; justify-content: center; flex: none; width: 242px; height: 30px; margin: -2px 0 0 9px; background: #e60020; border: 1px solid #a0102a; border-radius: 1px; font-size: 16.500px; font-weight: 700; color: #2a0008; letter-spacing: .2px; }
.b-st2 { margin-left: 40px; }

/* floating panel */
.panel { position: absolute; left: 1322px; top: 322px; display: flex; flex-direction: column; width: 362px; height: 592px; padding-top: 6px; background: #4a4a4a; border-top: 0; border-left: 2px solid #222; box-shadow: -4px 0 6px rgba(0, 0, 0, .1); }
.panel::before { content: ""; position: absolute; left: -2px; right: 0; top: 0; height: 6px; background: #222; }
.phead { display: flex; align-items: center; flex: none; height: 42px; background: #3a3a3a; border-bottom: 2px solid #2d2d2d; }
.ptab { display: flex; align-items: center; gap: 6px; width: 123px; height: 100%; padding: 2px 0 0 11px; background: #4a4a4a; font-size: 18.500px; font-weight: 700; color: #dcdcdc; }
.pmore { margin-left: auto; font-size: 22px; line-height: 20px; color: #ccc; }
.pbar { display: block; width: 3px; height: 20px; margin: 0 8px 0 12px; border-left: 1px solid #5a5a5a; border-right: 1px solid #5a5a5a; }
.phead .burger { margin-right: 8px; }
.pbody { display: flex; flex: 1; min-height: 0; border-bottom: 2px solid #2f2f2f; }
.plist { flex: 1; min-width: 0; margin-left: 2px; }
.pscroll { display: flex; justify-content: center; flex: none; width: 18px; padding-top: 6px; background: #3a3a3a; }
.pscroll .tri { border-bottom-color: #666; }
.row { display: flex; align-items: center; height: 33px; font-size: 15.500px; letter-spacing: -.15px; color: #bdbdbd; background: repeating-linear-gradient(90deg, #0f0f0f 0 2px, transparent 2px 3px) right bottom / 311px 2px no-repeat; white-space: nowrap; }
.row .tri { border-left-width: 7px; border-right-width: 7px; border-top-width: 7px; border-top-color: #d0d0d0; margin-right: 3px; margin-top: -5px; }
.lv0 { padding-left: 2px; }
.lv1 { padding-left: 25px; }
.lv2 { padding-left: 64px; }
.rtext { flex: 1; }
.current { background: repeating-linear-gradient(90deg, #0f0f0f 0 2px, transparent 2px 3px) right bottom / 311px 2px no-repeat, #465566; color: #fff; font-weight: 700; font-size: 17px; letter-spacing: 0; }
.ri { flex: none; width: 26px; height: 28px; margin-right: 10px; }
.tb { display: flex; align-items: center; justify-content: center; flex: none; width: 16px; height: 16px; margin-right: 8px; border: 1px solid #ddd; background: #2e2e2e; font: 700 13px/1 "Liberation Serif", serif; color: #e6e6e6; }
.xb { background: #3a3a3a; }
.pfoot { position: relative; display: flex; align-items: center; flex: none; height: 38px; padding: 2px 0 0 8px; border-bottom: 2px solid #111; }
.pfoot-text { flex: 1; font-size: 15.500px; color: #c4c4c4; }
.pf-warn { margin-right: 20px; }
.pf-sync { margin-right: 13px; }
.pf-on { display: flex; align-items: center; justify-content: center; width: 39px; height: 33px; margin-right: 23px; background: #353535; }
.pgrip { display: flex; align-items: center; flex: none; height: 12px; background: #4a4a4a; border-bottom: 1px solid #2e2e2e; }

/* overlays */
.watermark { position: absolute; left: 97px; top: 943px; pointer-events: none; }
.ibeam { position: absolute; left: 1054px; top: 772px; pointer-events: none; }
```
